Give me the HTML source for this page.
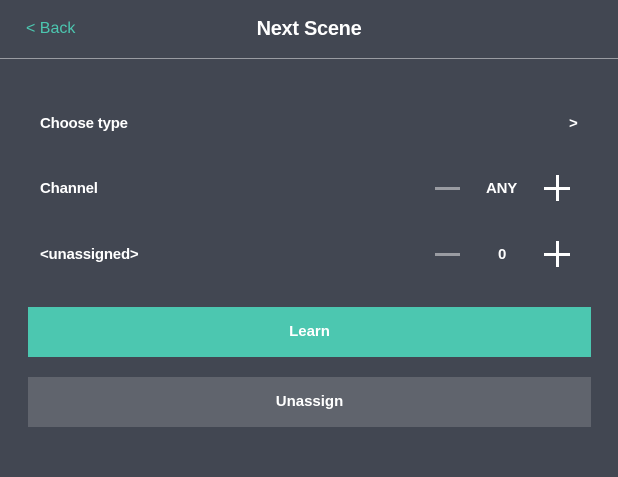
<!DOCTYPE html>
<html><head><style>
body{margin:0;width:618px;height:477px;background:#424752;font-family:"Liberation Sans",sans-serif;color:#fff;position:relative;overflow:hidden}
.a{position:absolute}
.t{font-size:15px;font-weight:bold;letter-spacing:-0.2px}
.h{position:absolute;height:3px;background:#9a9ca2;width:25px}
.p1{position:absolute;width:26px;height:3px;background:#fff}
.p2{position:absolute;width:3px;height:26px;background:#fff}
.btn{position:absolute;left:28px;width:563px;height:50px;line-height:50px;text-align:center;font-size:15px;font-weight:bold}
</style></head><body>
<div class="a" style="left:26px;top:20px;font-size:16px;color:#4cc7b0">&lt; Back</div>
<div class="a" style="left:0;width:618px;top:18px;text-align:center;font-size:20px;font-weight:bold;letter-spacing:-0.3px">Next Scene</div>
<div class="a" style="left:0;top:58px;width:618px;height:1px;background:#9a9ca2"></div>
<div class="a t" style="left:40px;top:115px">Choose type</div>
<div class="a t" style="left:569px;top:115px">&gt;</div>
<div class="a t" style="left:40px;top:180px">Channel</div>
<div class="h" style="left:435px;top:187px"></div>
<div class="a t" style="left:486px;top:180px">ANY</div>
<div class="p1" style="left:544px;top:187px"></div><div class="p2" style="left:556px;top:175px"></div>
<div class="a t" style="left:40px;top:246px">&lt;unassigned&gt;</div>
<div class="h" style="left:435px;top:253px"></div>
<div class="a t" style="left:498px;top:246px">0</div>
<div class="p1" style="left:544px;top:253px"></div><div class="p2" style="left:556px;top:241px"></div>
<div class="btn" style="top:307px;background:#4cc7b0">Learn</div>
<div class="btn" style="top:377px;background:#60646d">Unassign</div>
</body></html>
